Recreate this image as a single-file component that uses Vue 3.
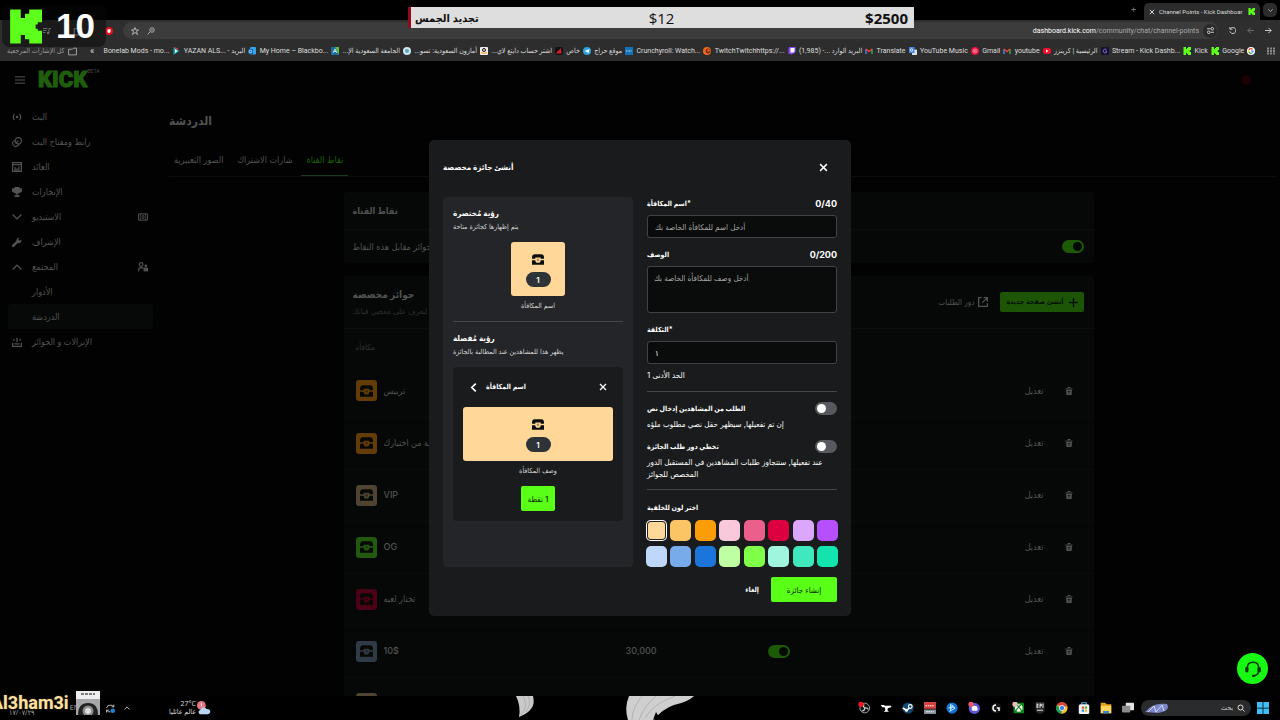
<script setup>
import { ref } from 'vue'

const bookmarks = [
  { text: 'Bonelab Mods - mo...', icon: 'play' },
  { text: 'YAZAN ALS... - البريد', icon: 'outlook' },
  { text: 'My Home – Blackbo...', icon: 'board' },
  { text: 'الجامعة السعودية الإ...', icon: 'round', rtl: true },
  { text: 'أمازون السعودية: تسو...', icon: 'amazon', rtl: true },
  { text: 'اشتر حساب دايتع لاي...', icon: 'redtri', rtl: true },
  { text: 'خاص', icon: 'telegram', rtl: true },
  { text: 'موقع حراج', icon: 'haraj', rtl: true },
  { text: 'Crunchyroll: Watch...', icon: 'crunchy' },
  { text: 'TwitchTwitchhttps://...', icon: 'twitch' },
  { text: 'البريد الوارد ...- (1,985)', icon: 'gmail', rtl: true },
  { text: 'Translate', icon: 'translate' },
  { text: 'YouTube Music', icon: 'ytmusic' },
  { text: 'Gmail', icon: 'gmail' },
  { text: 'youtube', icon: 'youtube' },
  { text: 'الرئيسية | كرينزز', icon: 'creators', rtl: true },
  { text: 'Stream - Kick Dashb...', icon: 'kick' },
  { text: 'Kick', icon: 'kick' },
  { text: 'Google', icon: 'google' }
]

const nav = [
  { text: 'البث', icon: 'live' },
  { text: 'رابط ومفتاح البث', icon: 'link' },
  { text: 'العائد', icon: 'chart' },
  { text: 'الإنجازات', icon: 'trophy' },
  { text: 'الاستيديو', icon: 'down', end: 'studio' },
  { text: 'الإشراف', icon: 'wrench' },
  { text: 'المجتمع', icon: 'up', end: 'people' },
  { text: 'الأدوار' },
  { text: 'الدردشة', active: true },
  { text: 'الإنزالات و الجوائز', icon: 'drops' }
]

const rewards = [
  { name: 'تربيس', color: '#643c05' },
  { name: 'أغنية من اختيارك', color: '#643c05' },
  { name: 'VIP', color: '#4f4431' },
  { name: 'OG', color: '#23580f' },
  { name: 'تختار لعبه', color: '#4b0016' },
  { name: '10$', color: '#2f3a46', cost: '30,000' },
  { name: '', color: '#4f4431' }
]

const swatches = [
  '#ffd899', '#fbc566', '#fb9d08', '#f9c8da', '#eb5f8d', '#dc0040', '#dba6fb', '#b650ff',
  '#bfd7f8', '#77abe9', '#1b75db', '#bfffa3', '#80ff48', '#9ff5dd', '#3fe8bd', '#13e4ad'
]
const picked = ref(0)

const apps = ['obs', 'anvil', 'steam', 'stream', 'battle', 'discord', 'logi', 'xbox', 'epic', 'chrome', 'store', 'files', 'tasks']
</script>

<template>
  <div class="screen">
    <svg class="defs" aria-hidden="true">
      <symbol id="kick" viewBox="0 0 16 16"><path fill="#5dff1c" d="M1 0h5v4h2V2h2V0h6v6h-2v1h-1v2h1v1h2v6h-6v-2H8v-2H6v4H1z" /></symbol>
      <symbol id="play" viewBox="0 0 16 16"><path fill="#16a5a5" d="M3 0l12 8-12 8z" /><path fill="#e33" d="M3 0l10 7-2-5z" /><path fill="#fff" d="M6 4l5 4-5 4z" /></symbol>
      <symbol id="outlook" viewBox="0 0 16 16"><rect x="4" width="12" height="15" rx="2" fill="#34a5e8" /><rect y="4" width="10" height="10" rx="1" fill="#0a62b5" /><circle cx="5" cy="9" r="2.5" fill="none" stroke="#fff" stroke-width="1.5" /></symbol>
      <symbol id="board" viewBox="0 0 16 16"><rect width="16" height="16" fill="#1c6d9e" /><path fill="#5bbf3a" d="M8 0h8v16z" /><path d="M4 12l4-8 4 8M6 9h4" stroke="#fff" stroke-width="1.5" fill="none" /></symbol>
      <symbol id="round" viewBox="0 0 16 16"><circle cx="8" cy="8" r="8" fill="#cfe6ee" /><circle cx="8" cy="8" r="4" fill="#5aa5bb" /></symbol>
      <symbol id="amazon" viewBox="0 0 16 16"><rect width="16" height="16" rx="2" fill="#eee" /><circle cx="8" cy="6" r="3" fill="none" stroke="#111" stroke-width="2" /><path d="M2 11q6 4 12 0" stroke="#f90" stroke-width="2" fill="none" /></symbol>
      <symbol id="redtri" viewBox="0 0 16 16"><rect width="16" height="16" rx="4" fill="#111" /><path fill="#d81b2e" d="M1 13L12 2l1 11z" /></symbol>
      <symbol id="telegram" viewBox="0 0 16 16"><circle cx="8" cy="8" r="8" fill="#2ba3e0" /><path fill="#fff" d="M3 8l10-4-2 9-3-3z" /></symbol>
      <symbol id="haraj" viewBox="0 0 16 16"><rect width="16" height="16" fill="#1472bb" /><path d="M2 8h12" stroke="#bcd9ee" stroke-width="2" stroke-dasharray="2 1" /></symbol>
      <symbol id="crunchy" viewBox="0 0 16 16"><circle cx="8" cy="8" r="8" fill="#f26a1b" /><circle cx="10" cy="8" r="5" fill="#7c2c08" /><circle cx="11" cy="7" r="2.5" fill="#f26a1b" /></symbol>
      <symbol id="twitch" viewBox="0 0 16 16"><path fill="#9147ff" d="M3 0h12v10l-5 4H8l-2 2v-2H1V3z" /><path fill="#fff" d="M5 2h8v7l-2 2H5z" /></symbol>
      <symbol id="gmail" viewBox="0 0 16 16"><path d="M2 14V4" stroke="#4285f4" stroke-width="3" /><path d="M14 14V4" stroke="#34a853" stroke-width="3" /><path d="M2 4l6 5 6-5" stroke="#ea4335" stroke-width="3" fill="none" /></symbol>
      <symbol id="translate" viewBox="0 0 16 16"><rect x="6" y="5" width="10" height="11" rx="1" fill="#dadde1" /><rect width="11" height="12" rx="1" fill="#4385f0" /><circle cx="5" cy="6" r="2.5" fill="none" stroke="#fff" stroke-width="1.5" /></symbol>
      <symbol id="ytmusic" viewBox="0 0 16 16"><circle cx="8" cy="8" r="8" fill="#f20d3d" /><circle cx="8" cy="8" r="4" fill="none" stroke="#fff" /><path fill="#fff" d="M7 6l3 2-3 2z" /></symbol>
      <symbol id="youtube" viewBox="0 0 16 16"><rect y="2" width="16" height="12" rx="4" fill="#f20d2d" /><path fill="#fff" d="M6 5l5 3-5 3z" /></symbol>
      <symbol id="creators" viewBox="0 0 16 16"><rect width="16" height="16" rx="2" fill="#17112b" /><path d="M11 5a4 4 0 1 0 0 6V8H8" fill="none" stroke="#7a64c9" stroke-width="2" /></symbol>
      <symbol id="google" viewBox="0 0 16 16"><circle cx="8" cy="8" r="8" fill="#fff" /><path d="M11 5a4 4 0 0 0-7 1" stroke="#ea4335" stroke-width="2.4" fill="none" /><path d="M4 6a4 4 0 0 0 0 4" stroke="#fbbc05" stroke-width="2.4" fill="none" /><path d="M4 10a4 4 0 0 0 7 1" stroke="#34a853" stroke-width="2.4" fill="none" /><path d="M8 8h4q0 2-1 3" stroke="#4285f4" stroke-width="2.4" fill="none" /></symbol>

      <symbol id="live" viewBox="0 0 16 16"><path d="M4 3Q0 8 4 13M12 3q4 5 0 10" fill="none" stroke="currentColor" stroke-width="1.8" /><circle cx="8" cy="8" r="2" fill="currentColor" /></symbol>
      <symbol id="link" viewBox="0 0 16 16"><circle cx="10" cy="6" r="5" fill="none" stroke="currentColor" stroke-width="1.8" /><path d="M5 5q-5 3-4 6 2 5 6 4 4-1 5-4M6 10l4-4" fill="none" stroke="currentColor" stroke-width="1.8" /></symbol>
      <symbol id="chart" viewBox="0 0 16 16"><path d="M1 1v14h14V1zM1 4h14M5 15V8M8 15v-5M11 15V7" fill="none" stroke="currentColor" stroke-width="2" /></symbol>
      <symbol id="trophy" viewBox="0 0 16 16"><path fill="currentColor" d="M4 0h8v2h4v3q0 4-4 4-1 1-3 2v2h3v3H4v-3h3v-2q-2-1-3-2-4 0-4-4V2h4z" /></symbol>
      <symbol id="down" viewBox="0 0 16 16"><path d="M1 4l7 7 7-7" fill="none" stroke="currentColor" stroke-width="2.2" /></symbol>
      <symbol id="up" viewBox="0 0 16 16"><path d="M1 12l7-7 7 7" fill="none" stroke="currentColor" stroke-width="2.2" /></symbol>
      <symbol id="wrench" viewBox="0 0 16 16"><path d="M2 14l7-7" stroke="currentColor" stroke-width="4" stroke-linecap="round" /><path fill="currentColor" d="M7 6q0-5 5-5l-2 3 2 2 3-2q1 6-5 6z" /></symbol>
      <symbol id="studio" viewBox="0 0 16 16"><path d="M1 3h14v10H1z" fill="none" stroke="currentColor" stroke-width="1.600" /><path d="M4 3v10M12 3v10" stroke="currentColor" /><rect x="6.500" y="6" width="3" height="4" fill="none" stroke="currentColor" stroke-width="1.200" /></symbol>
      <symbol id="people" viewBox="0 0 16 16"><circle cx="5" cy="4" r="3" fill="none" stroke="currentColor" stroke-width="1.8" /><path d="M1 15v-2q0-4 4-4 3 0 4 2" fill="none" stroke="currentColor" stroke-width="1.8" /><circle cx="12.500" cy="6" r="2.200" fill="currentColor" /><rect x="9" y="9" width="7" height="6" fill="currentColor" /></symbol>
      <symbol id="drops" viewBox="0 0 16 16"><path d="M1 9v6h14V9M4 11h8M8 1v7M3 3v3M13 3v3" fill="none" stroke="currentColor" stroke-width="2" /></symbol>
      <symbol id="chest" viewBox="0 0 18 16"><path fill="currentColor" d="M4 0h10q4 0 4 5v2h-5V5H5v2H0V5q0-5 4-5zM0 9h5q0 4 4 4t4-4h5v7H0z" /><circle cx="9" cy="8.500" r="2" fill="currentColor" opacity=".35" /></symbol>
      <symbol id="trash" viewBox="0 0 16 16"><path d="M1 4h14M5 1h6" stroke="currentColor" stroke-width="2" /><path fill="currentColor" d="M2 6h12l-1 10H3z" /><path d="M5 9h6M6 12h4" stroke="#050807" stroke-width="1.200" /></symbol>
      <symbol id="x" viewBox="0 0 16 16"><path d="M2 2l12 12M14 2L2 14" stroke="currentColor" stroke-width="2.600" /></symbol>
      <symbol id="back" viewBox="0 0 16 16"><path d="M12 1L5 8l7 7" fill="none" stroke="currentColor" stroke-width="3" /></symbol>
      <symbol id="plus" viewBox="0 0 16 16"><path d="M8 0v16M0 8h16" stroke="currentColor" stroke-width="2.600" /></symbol>
      <symbol id="ext" viewBox="0 0 16 16"><path d="M6 1H1v14h14v-5M9 1h6v6M15 1L7 9" fill="none" stroke="currentColor" stroke-width="2" /></symbol>
      <symbol id="headset" viewBox="0 0 16 16"><path d="M3 9V7q0-5 5-5t5 5v2q0 4-4 5" fill="none" stroke="currentColor" stroke-width="1.4" /><rect x="1" y="6" width="3" height="5" rx="1.500" fill="currentColor" /><rect x="12" y="6" width="3" height="5" rx="1.500" fill="currentColor" /><rect x="7" y="13" width="3" height="2" rx="1" fill="currentColor" /></symbol>

      <symbol id="obs" viewBox="0 0 16 16"><circle cx="9" cy="8" r="6.500" fill="#111" stroke="#ccc" /><path d="M9 8q-3-2-1-5M9 8q3-1 5 2M9 8q0 4-4 4" fill="none" stroke="#ccc" stroke-width="1.500" /><circle cx="4" cy="3" r="3.500" fill="#f5141e" /></symbol>
      <symbol id="anvil" viewBox="0 0 16 16"><path fill="#fff" d="M1 4h5v1h9v2q-4 0-5 2v2l2 2H5l2-2V9L6 7H3z" /></symbol>
      <symbol id="steam" viewBox="0 0 16 16"><circle cx="8" cy="8" r="7.500" fill="#14486f" /><circle cx="11" cy="6" r="2.500" fill="none" stroke="#fff" stroke-width="1.500" /><path d="M1 8l5 3 4-3" stroke="#fff" stroke-width="2" fill="none" /><circle cx="6" cy="11" r="2" fill="#fff" /></symbol>
      <symbol id="stream" viewBox="0 0 16 16"><rect width="16" height="9" fill="#d8413c" /><rect y="10" width="16" height="6" fill="#87909a" /><path d="M2 5h12M3 13h10" stroke="#fff" stroke-width="1.500" stroke-dasharray="2 1" /></symbol>
      <symbol id="battle" viewBox="0 0 16 16"><circle cx="8" cy="8" r="7.500" fill="#1473d2" /><path d="M6 3l6 5-6 4zM3 8q4-3 9 0M5 13l4-9" fill="none" stroke="#bfe5ff" stroke-width="1.300" /></symbol>
      <symbol id="discord" viewBox="0 0 16 16"><circle cx="8.500" cy="8.500" r="7.500" fill="#5c55d8" /><path fill="#fff" d="M5 6q4-2 7 0l1 5-3 1-1-1-1 1-3-1z" /><circle cx="4" cy="3" r="3.500" fill="#ee5967" /></symbol>
      <symbol id="logi" viewBox="0 0 16 16"><circle cx="8" cy="8" r="7" fill="#161616" /><path d="M8 4a4 4 0 0 0 0 8M9 8h3v4" fill="none" stroke="#fff" stroke-width="2" /></symbol>
      <symbol id="xbox" viewBox="0 0 16 16"><rect x="2" y="1" width="14" height="14" rx="1" fill="#12851a" /><circle cx="9" cy="8" r="5" fill="#fff" /><path d="M5 12q2-4 4-5 2 1 4 5M6 4l3 2 3-2" stroke="#12851a" stroke-width="1.500" fill="none" /><circle cx="4" cy="3" r="3.500" fill="#e8bdc0" /></symbol>
      <symbol id="epic" viewBox="0 0 16 16"><path fill="#292929" d="M2 0h12v13l-6 3-6-3z" /><path d="M4 2v6M4 3h2M4 5h2M4 7h2M8 2v6M8 3h2v2H8M12 2v6M4 11h8" stroke="#eee" stroke-width="1.200" fill="none" /></symbol>
      <symbol id="chrome" viewBox="0 0 16 16"><circle cx="8" cy="8" r="7.500" fill="#f7c51d" /><path fill="#db4437" d="M1 4a7.500 7.500 0 0 1 14 2H8z" /><path fill="#1b9b55" d="M1 4a7.500 7.500 0 0 0 6 11.500L8 11z" /><circle cx="8" cy="8" r="3.500" fill="#3f7de8" stroke="#fff" /></symbol>
      <symbol id="store" viewBox="0 0 16 16"><path d="M5 3V1h6v2" fill="none" stroke="#4bb3ea" stroke-width="1.500" /><rect x="1" y="3" width="14" height="13" rx="2" fill="#eef2f5" /><path fill="#e8502f" d="M5 6h3v3H5z" /><path fill="#5bb52d" d="M9 6h3v3H9z" /><path fill="#2b8fe0" d="M5 10h3v3H5z" /><path fill="#f4b521" d="M9 10h3v3H9z" /></symbol>
      <symbol id="files" viewBox="0 0 16 16"><path fill="#e2a21a" d="M1 1h6l2 2h6v12H1z" /><path fill="#ffd55c" d="M1 5h14v10H1z" /><path fill="#2f86d6" d="M4 12h8v3H4z" /></symbol>
      <symbol id="tasks" viewBox="0 0 16 16"><rect x="5" y="1" width="11" height="10" rx="1" fill="#e4e4e4" /><rect y="5" width="11" height="9" rx="1" fill="#8b8b8b" /></symbol>
    </svg>

    <header class="browser">
      <div class="tabstrip">
        <span class="newtab">+</span>
        <div class="tab">
          <button class="bare" aria-label="Close tab"><svg class="i6"><use href="#x" /></svg></button>
          <span class="tabname">Channel Points - Kick Dashboar</span>
          <svg class="i7"><use href="#kick" /></svg>
        </div>
        <button class="tabmenu" aria-label="Tabs"><svg class="i5"><use href="#down" /></svg></button>
      </div>
      <div class="toolbar">
        <div class="tools">
          <svg class="i8" viewBox="0 0 16 16"><path d="M0 3h9M0 7h7M0 11h5M12 12V3h4" fill="none" stroke="#ccc" stroke-width="2" /><circle cx="10" cy="12" r="2.500" fill="#ccc" /></svg>
          <svg class="i10" viewBox="0 0 16 16"><path d="M2 4h4q2-4 4 0h4v10H2z" fill="none" stroke="#aaa" stroke-width="2" /></svg>
          <svg class="i8" viewBox="0 0 16 16"><circle cx="8" cy="8" r="8" fill="#e0101c" /><path fill="#fff" d="M5 5l6-1v6q-3 4-6 0z" /></svg>
        </div>
        <div class="address">
          <svg class="i8" viewBox="0 0 16 16"><path d="M8 1l2 5h5l-4 3 2 6-5-4-5 4 2-6-4-3h5z" fill="none" stroke="#ccc" stroke-width="1.600" /></svg>
          <svg class="i8" viewBox="0 0 16 16"><circle cx="10" cy="6" r="4.500" fill="none" stroke="#aaa" stroke-width="2" /><path d="M7 9l-6 6M8 6h4" stroke="#aaa" stroke-width="2" /></svg>
          <span class="url"><b>dashboard.kick.com</b>/community/chat/channel-points</span>
          <span class="site"><svg class="i7" viewBox="0 0 16 16"><path d="M0 4h8M8 12h8" stroke="#ddd" stroke-width="2" /><circle cx="12" cy="4" r="3" fill="none" stroke="#ddd" stroke-width="2" /><circle cx="4" cy="12" r="3" fill="none" stroke="#ddd" stroke-width="2" /></svg></span>
        </div>
        <button class="bare" aria-label="Reload"><svg class="i7" viewBox="0 0 16 16"><path d="M3 4a7 7 0 1 1-1 6M2 0v5h6" fill="none" stroke="#ddd" stroke-width="2" /></svg></button>
        <button class="bare" aria-label="Forward"><svg class="i7" viewBox="0 0 16 16"><path d="M16 8H2M8 2L2 8l6 6" fill="none" stroke="#777" stroke-width="2" /></svg></button>
        <button class="bare" aria-label="Back"><svg class="i7" viewBox="0 0 16 16"><path d="M0 8h14M8 2l6 6-6 6" fill="none" stroke="#ddd" stroke-width="2" /></svg></button>
      </div>
      <nav class="bookmarks">
        <a href="#" class="bm all"><span dir="rtl">كل الإشارات المرجعية</span><svg class="i9" viewBox="0 0 16 16"><path d="M1 4h7l2-2h5v12H1z" fill="none" stroke="#aaa" stroke-width="1.600" /></svg></a>
        <span class="more">«</span>
        <a v-for="(b, i) in bookmarks" :key="i" href="#" class="bm">
          <span :dir="b.rtl ? 'rtl' : 'ltr'">{{ b.text }}</span>
          <svg class="i8"><use :href="'#' + b.icon" /></svg>
        </a>
        <svg class="i8 grid" viewBox="0 0 16 16"><path d="M0 3h16M0 8h16M0 13h16" stroke="#888" stroke-width="4" stroke-dasharray="4 2" /></svg>
      </nav>
    </header>

    <div class="page">
      <div class="dash">
        <div class="topbar">
          <svg class="burger" viewBox="0 0 16 16"><path d="M0 3h16M0 8h16M0 13h16" stroke="#555" stroke-width="1.600" /></svg>
          <span class="brand">KICK</span><span class="beta">BETA</span>
          <span class="avatar"></span>
        </div>
        <div class="cols">
          <nav class="side">
            <a v-for="(n, i) in nav" :key="i" href="#" class="navitem" :class="{ active: n.active }">
              <svg class="i10"><use v-if="n.icon" :href="'#' + n.icon" /></svg>
              <span>{{ n.text }}</span>
              <svg v-if="n.end" class="i10 end"><use :href="'#' + n.end" /></svg>
            </a>
          </nav>
          <main class="main">
            <h1>الدردشة</h1>
            <div class="tabs">
              <a href="#">الصور التعبيرية</a>
              <a href="#">شارات الاشتراك</a>
              <a href="#" class="on">نقاط القناة</a>
            </div>
            <section class="card">
              <h2>نقاط القناة</h2>
              <div class="allow">
                <label for="allow">اسمح للمشاهدين بالمطالبة بجوائز مقابل هذه النقاط</label>
                <input id="allow" type="checkbox" class="switch dim" checked>
              </div>
            </section>
            <section class="card">
              <div class="cardhead">
                <div>
                  <h3>جوائز مخصصة</h3>
                  <p>أنشئ جوائز خاصة بك لتعرف على معجبي قناتك</p>
                </div>
                <a href="#" class="queue">دور الطلبات <svg class="i10"><use href="#ext" /></svg></a>
                <button class="new">أنشئ صفحة جديدة <svg class="i9"><use href="#plus" /></svg></button>
              </div>
              <table>
                <thead><tr><th class="c1">مكافأة</th><th class="c2"></th><th class="c3"></th><th></th></tr></thead>
                <tbody>
                  <tr v-for="(r, i) in rewards" :key="i">
                    <td><div class="reward"><span class="tile" :style="{ background: r.color }"><svg class="tchest"><use href="#chest" /></svg></span>{{ r.name }}</div></td>
                    <td>{{ r.cost }}</td>
                    <td><input type="checkbox" class="switch dim" checked :aria-label="r.name"></td>
                    <td><div class="acts"><button class="bare">تعديل</button><button class="bare" aria-label="Delete"><svg class="i8"><use href="#trash" /></svg></button></div></td>
                  </tr>
                </tbody>
              </table>
            </section>
          </main>
        </div>
      </div>

      <div class="backdrop">
        <form class="dialog" role="dialog" @submit.prevent>
          <div class="dhead">
            <h2>أنشئ جائزة مخصصة</h2>
            <button type="button" class="bare" aria-label="Close"><svg class="i9"><use href="#x" /></svg></button>
          </div>
          <div class="dbody">
            <div class="preview">
              <h3>رؤية مُختصرة</h3>
              <p>يتم إظهارها كجائزة متاحة</p>
              <div class="mini"><svg class="chest"><use href="#chest" /></svg><span class="pill">1</span></div>
              <p class="mid">اسم المكافأة</p>
              <hr>
              <h3>رؤية مُفصلة</h3>
              <p>يظهر هذا للمشاهدين عند المطالبة بالجائزة</p>
              <div class="detail">
                <div class="dethead">
                  <svg class="i9"><use href="#back" /></svg>
                  <b>اسم المكافأة</b>
                  <svg class="i8"><use href="#x" /></svg>
                </div>
                <div class="mini wide"><svg class="chest"><use href="#chest" /></svg><span class="pill">1</span></div>
                <p class="mid">وصف المكافأة</p>
                <button type="button" class="go point" dir="rtl">1 نقطة</button>
              </div>
            </div>
            <div class="fields">
              <div class="lab"><label for="name">اسم المكافأة*</label><span>0/40</span></div>
              <input id="name" class="box" placeholder="أدخل اسم للمكافأة الخاصة بك">
              <div class="lab"><label for="desc">الوصف</label><span>0/200</span></div>
              <textarea id="desc" class="box area" placeholder="أدخل وصف للمكافأة الخاصة بك"></textarea>
              <div class="lab"><label for="cost">التكلفة*</label></div>
              <input id="cost" class="box" value="١">
              <p class="hint">الحد الأدنى 1</p>
              <hr>
              <div class="opt"><label for="ask">الطلب من المشاهدين إدخال نص</label><input id="ask" type="checkbox" class="switch"></div>
              <p class="note">إن تم تفعيلها, سيظهر حقل نصي مطلوب ملؤه</p>
              <div class="opt second"><label for="skip">تخطي دور طلب الجائزة</label><input id="skip" type="checkbox" class="switch"></div>
              <p class="note">عند تفعيلها, ستتجاوز طلبات المشاهدين في المستقبل الدور<br>المخصص للجوائز</p>
              <hr class="last">
              <div class="lab">اختر لون للخلفية</div>
              <div class="swatches">
                <button v-for="(c, i) in swatches" :key="c" type="button" class="sw" :class="{ sel: i === picked }" :style="{ background: c }" :aria-label="c" @click="picked = i"></button>
              </div>
            </div>
          </div>
          <div class="dfoot">
            <button type="button" class="cancel">إلغاء</button>
            <button class="go create">إنشاء جائزة</button>
          </div>
        </form>
      </div>
      <button class="support" aria-label="Support"><svg class="i18"><use href="#headset" /></svg></button>
    </div>

    <footer class="taskbar">
      <div class="clock"><span class="date">١٧/٠٧/٢٩</span><span>EN</span></div>
      <svg class="i9 sync" viewBox="0 0 16 16"><path d="M1 7q1-5 7-5 4 0 6 3V1M14 5h-4M1 15v-4h4M1 11q3 4 7 3" fill="none" stroke="#ccc" stroke-width="1.600" /><circle cx="12" cy="12" r="4" fill="#1c83dc" /></svg>
      <svg class="i6"><use href="#up" /></svg>
      <div class="weather"><span>27°C</span><span>عالم عائليا</span></div>
      <svg class="wicon" viewBox="0 0 16 16"><circle cx="5" cy="5" r="5" fill="#e87582" /><path d="M5 2v4" stroke="#fff" /><path fill="#b9d5f5" d="M3 15q-3-3 1-5 3-5 7-1 5 0 4 4-1 2-3 2z" /></svg>
      <div class="apps">
        <svg v-for="a in apps" :key="a" class="app"><use :href="'#' + a" /></svg>
      </div>
      <div class="search">
        <svg class="bug" viewBox="0 0 24 11"><path fill="#7a86c8" d="M0 9Q8-1 22 1q4 7-9 9z" /><path d="M3 9l6-6 2 6 6-7 2 6" stroke="#d6d8f5" fill="none" /></svg>
        <input aria-label="Search" placeholder="بحث" dir="rtl">
        <svg class="i8" viewBox="0 0 16 16"><circle cx="7" cy="7" r="5" fill="none" stroke="#ddd" stroke-width="2" /><path d="M11 11l4 4" stroke="#ddd" stroke-width="2" /></svg>
      </div>
      <svg class="i12" viewBox="0 0 16 16"><path fill="#41bdf5" d="M0 0h7.500v7.500H0zM8.500 0H16v7.500H8.500zM0 8.500h7.500V16H0zM8.500 8.500H16V16H8.500z" /></svg>
      <svg class="feathers" viewBox="0 0 180 24"><path fill="#c9c9c9" d="M1 0h17q4 14-14 21Q6 10 1 0z" /><path d="M8 0q6 10-2 19M13 0q4 8-2 16" stroke="#b0b0b0" fill="none" /><path fill="#cfcfcf" d="M114 0h65q-6 6-20 9-12 4-20 15h-26q-4-12 1-24z" /><path d="M127 0q-10 12-10 24M141 0q-12 10-17 24M160 0q-22 8-30 22" stroke="#b2b2b2" fill="none" /><path fill="#000" d="M138 24l3-8 3 5z" /></svg>
    </footer>

    <div class="count"><svg class="bigk"><use href="#kick" /></svg><span>10</span></div>
    <div class="goal"><b dir="rtl">تجديد الجمس</b><span>$12</span><b>$2500</b></div>
    <div class="streamer">Al3ham3i</div>
    <svg class="washer" viewBox="0 0 24 24"><rect width="24" height="24" fill="#a7a7a9" /><path fill="#eee" d="M0 0h24v8H0z" /><path d="M5 3h14" stroke="#555" stroke-width="1.500" stroke-dasharray="3 1" /><path fill="#222" d="M2 24q0-12 10-12t10 12z" /><circle cx="12" cy="20" r="5.500" fill="#8e8e90" /><circle cx="12" cy="20" r="3" fill="#ddd" /></svg>
  </div>
</template>

<style>
body { background: #000; }
</style>

<style scoped>
* { box-sizing: border-box; }
.screen { position: relative; display: flex; flex-direction: column; height: 100vh; overflow: hidden; background: #000; color: #ddd; font: 8px/12px Inter, "DejaVu Sans Condensed", "DejaVu Sans", sans-serif; }
.defs { position: absolute; width: 0; height: 0; }
svg { flex: none; display: block; }
h1, h2, h3, p { margin: 0; font-size: inherit; }
a { color: inherit; text-decoration: none; }
button, input, textarea { font: inherit; color: inherit; margin: 0; }
.bare { padding: 0; border: 0; background: none; }
.i5 { width: 5px; height: 5px; } .i6 { width: 6px; height: 6px; } .i7 { width: 7px; height: 7px; }
.i8 { width: 8px; height: 8px; } .i9 { width: 9px; height: 9px; } .i10 { width: 10px; height: 10px; }
.i12 { width: 12px; height: 12px; } .i18 { width: 18px; height: 18px; }

.browser { flex: none; font: 7px/10px Roboto, "DejaVu Sans Condensed", "DejaVu Sans", sans-serif; color: #ddd; }
.tabstrip { display: flex; justify-content: flex-end; align-items: center; height: 20px; padding-right: 3px; }
.newtab { color: #777; margin-right: 8px; font-size: 9px; }
.tab { display: flex; align-items: center; gap: 4px; align-self: flex-end; width: 116px; height: 17px; padding: 0 5px; border-radius: 5px 5px 0 0; background: #2c2c2c; }
.tabname { flex: 1; font-size: 6px; white-space: nowrap; }
.tabmenu { display: grid; place-items: center; width: 14px; height: 14px; margin-left: 3px; padding: 0; border: 0; border-radius: 5px; background: #2c2c2c; }
.toolbar { display: flex; align-items: center; gap: 11px; height: 21px; padding-right: 8px; background: #2e2e2e; }
.tools { display: flex; align-items: center; gap: 22px; width: 112px; padding-left: 43px; }
.address { flex: 1; display: flex; align-items: center; gap: 8px; height: 17px; padding: 0 1px 0 8px; border-radius: 9px; background: #3c3c3c; }
.url { margin-left: auto; color: #aaa; }
.url b { font-weight: 400; color: #fff; }
.site { display: grid; place-items: center; width: 14px; height: 14px; margin-left: -4px; border-radius: 7px; background: #2a2a2a; }
.bookmarks { display: flex; align-items: center; justify-content: space-between; height: 20px; padding: 0 5px 0 7px; background: #2d2d2d; }
.bm { display: flex; align-items: center; gap: 3px; white-space: nowrap; }
.bm.all { color: #999; }
.more { margin: 0 6px 0 10px; font-size: 9px; }
.grid { margin-left: 8px; }

.page { position: relative; flex: 1; min-height: 0; overflow: hidden; background: #020202; }
.dash { height: 100%; color: #525252; font-size: 9px; }
.topbar { display: flex; align-items: center; height: 37px; padding: 0 29px 0 15px; }
.burger { width: 10px; height: 10px; margin-right: 13px; }
.brand { color: #1f5f0c; font: 900 22px/22px Roboto, sans-serif; -webkit-text-stroke: 1px #1f5f0c; }
.beta { align-self: flex-start; margin-top: 7px; color: #444; font-size: 5px; line-height: 6px; }
.avatar { width: 10px; height: 10px; margin-left: auto; border-radius: 5px; background: #190104; }
.cols { display: flex; }
.side { flex: none; width: 161px; padding: 6px 8px 0; }
.navitem { display: flex; align-items: center; gap: 10px; height: 25px; padding: 0 5px 0 4px; border-radius: 3px; font-weight: 500; }
.navitem.active { background: #060908; }
.end { margin-left: auto; }
.main { flex: 1; min-width: 0; padding-right: 4px; }
h1 { margin: 14px 8px 0; font-size: 12px; line-height: 18px; }
.tabs { display: flex; gap: 4px; margin: 22px 0 15px 8px; border-bottom: 1px solid #0b0d0c; }
.tabs a { height: 24px; padding: 0 5px; line-height: 16px; }
.tabs .on { color: #1c6207; border-bottom: 1px solid #1c3a20; }
.card { max-width: 750px; margin: 0 auto 13px; border-radius: 3px; background: #050807; }
.card h2 { height: 38px; padding-left: 9px; line-height: 38px; font-size: 9px; border-bottom: 1px solid #0b0e0d; }
.allow { display: flex; align-items: center; justify-content: space-between; height: 33px; padding: 0 10px 0 9px; }
.cardhead { display: flex; align-items: center; gap: 12px; height: 53px; padding: 0 10px 0 9px; border-bottom: 1px solid #0b0e0d; }
.cardhead > div { flex: 1; }
.cardhead h3 { font-size: 10px; line-height: 18px; }
.cardhead p { color: #2b2d2c; font-size: 8px; line-height: 16px; }
.queue { display: flex; align-items: center; gap: 4px; font-size: 8px; }
.new { display: flex; align-items: center; gap: 5px; height: 20px; padding: 0 6px; border: 0; border-radius: 2px; background: #1b5505; color: #031001; font-size: 7px; font-weight: 600; }
table { width: 100%; border-collapse: collapse; table-layout: fixed; }
th { height: 36px; padding: 0 12px; text-align: left; font-weight: 400; color: #303231; font-size: 8px; }
.c1 { width: 36%; } .c2 { width: 19%; } .c3 { width: 15%; }
td { height: 52px; padding: 0 12px; border-bottom: 1px solid #090c0b; vertical-align: middle; font-weight: 500; }
.reward { display: flex; align-items: center; gap: 7px; white-space: nowrap; }
.tile { display: grid; place-items: center; width: 21px; height: 21px; border-radius: 3px; }
.tchest { width: 13px; height: 12px; color: #080805; }
.acts { display: flex; justify-content: flex-end; gap: 21px; padding-right: 9px; }

.switch { appearance: none; flex: none; display: block; width: 22px; height: 13px; padding: 2px; border-radius: 7px; background: #565a5e; }
.switch::before { content: ""; display: block; width: 9px; height: 9px; border-radius: 5px; background: #fff; }
.switch.dim { background: #1d5a07; }
.switch.dim::before { margin-left: auto; background: #030a02; }

.backdrop { position: absolute; inset: 0; display: grid; place-items: center; padding-bottom: 1px; }
.dialog { width: 422px; padding: 0 14px 14px; border-radius: 5px; background: #191b1c; color: #fff; }
.dhead { display: flex; align-items: center; justify-content: space-between; height: 57px; padding: 0 9px 3px 0; }
.dbody { display: grid; grid-template-columns: minmax(0, 1fr) minmax(0, 1fr); gap: 14px; }
.preview { padding: 10px; border-radius: 4px; background: #232528; }
.preview h3 { font-size: 8px; line-height: 13px; }
.preview p { font-size: 7px; line-height: 14px; color: #d8d8d8; }
.preview .mid { text-align: center; line-height: 20px; }
.mini { display: flex; flex-direction: column; align-items: center; gap: 7px; width: 54px; height: 54px; margin: 8px auto 0; padding-top: 12px; border-radius: 3px; background: #ffd899; }
.mini.wide { width: auto; margin-top: 0; }
.chest { width: 12px; height: 11px; color: #0b0c0d; }
.pill { display: grid; place-items: center; width: 25px; height: 15px; border-radius: 8px; background: #2e3338; font-weight: 600; }
hr { margin: 0; border: 0; border-top: 1px solid #44474a; }
.preview hr { margin: 5px 0 10px; }
.detail { margin-top: 8px; padding: 0 10px 10px; border-radius: 4px; background: #191b1c; }
.dethead { display: flex; align-items: center; gap: 8px; height: 40px; padding: 0 6px; }
.dethead b { flex: 1; font-size: 7px; }
.go { border: 0; border-radius: 2px; background: #5aff17; color: #0d2a04; font-weight: 500; }
.point { display: block; height: 25px; margin: 5px auto 0; padding: 0 7px; }
.lab { display: flex; align-items: center; justify-content: space-between; height: 13px; font-weight: 700; font-size: 7px; }
.lab span { font-size: 9px; }
.box { display: block; width: 100%; height: 23px; padding: 0 7px; border: 1px solid #414447; border-radius: 3px; background: #0a0b0b; outline: 0; }
.box::placeholder { color: #a5a5a5; }
.fields .box { margin: 5px 0 10px; }
.fields .area { height: 47px; padding: 5px 6px; resize: none; }
.fields #cost { margin-bottom: 5px; }
.hint { line-height: 13px; }
.fields hr { margin: 9px 0 10px; }
.fields .last { margin-bottom: 11px; }
.opt { display: flex; align-items: center; justify-content: space-between; height: 13px; font-weight: 700; font-size: 7px; }
.note { margin-top: 3px; line-height: 12px; white-space: nowrap; }
.second { margin-top: 10px; }
.swatches { display: grid; grid-template-columns: repeat(8, 21px); justify-content: space-between; gap: 5px 0; margin: 6px -1px 0; }
.sw { height: 21px; padding: 0; border: 0; border-radius: 5px; }
.sw.sel { box-shadow: inset 0 0 0 1px #fff, inset 0 0 0 2px #222; }
.dfoot { display: flex; justify-content: flex-end; align-items: center; gap: 12px; margin-top: 10px; }
.cancel { padding: 0; border: 0; background: none; font-size: 7px; font-weight: 700; }
.create { height: 25px; width: 66px; padding: 0; }
.support { position: absolute; right: 12px; bottom: 12px; display: grid; place-items: center; width: 31px; height: 31px; padding: 0; border: 0; border-radius: 16px; background: #17f812; color: #06380a; }

.taskbar { position: relative; flex: none; display: flex; align-items: center; height: 24px; padding: 0 11px 0 9px; font: 7px/8px "Open Sans", "DejaVu Sans Condensed", "DejaVu Sans", sans-serif; }
.clock { display: flex; align-items: center; justify-content: space-between; width: 70px; margin-right: 27px; color: #aaa; }
.date { padding-top: 10px; }
.sync { margin-right: 9px; }
.weather { display: flex; flex-direction: column; align-items: flex-end; width: 66px; margin-right: 1px; }
.wicon { width: 14px; height: 14px; }
.apps { display: flex; align-items: center; gap: 10px; margin-left: auto; margin-right: 7px; }
.app { width: 12px; height: 12px; }
.search { display: flex; align-items: center; gap: 4px; width: 110px; height: 16px; margin-right: 6px; padding: 0 6px 0 4px; border-radius: 8px; background: #2a2b2d; }
.bug { width: 24px; height: 11px; }
.search input { flex: 1; min-width: 0; padding: 0; border: 0; background: none; }
.search input::placeholder { color: #ccc; }
.feathers { position: absolute; left: 515px; top: 0; width: 180px; height: 24px; }

.count { position: absolute; left: 2px; top: 5px; display: flex; align-items: center; gap: 14px; height: 42px; width: 104px; padding-left: 6px; border-radius: 8px; background: rgba(8, 8, 8, .5); color: #fff; font: 700 35px/38px "Liberation Sans", sans-serif; }
.bigk { width: 34px; height: 35px; }
.goal { position: absolute; left: 408px; top: 7px; display: grid; grid-template-columns: 1fr auto 1fr; align-items: center; width: 506px; height: 21px; padding: 0 6px 0 4px; border-left: 3px solid #8c0c1c; background: #dedede; color: #111; font: 15px/20px "Open Sans", "DejaVu Sans Condensed", "DejaVu Sans", sans-serif; }
.goal b:first-child { justify-self: start; font-size: 11px; }
.goal b:last-child { justify-self: end; }
.streamer { position: absolute; left: -9px; bottom: 7px; color: #ffe0a0; font: 700 18px/20px Roboto, sans-serif; text-shadow: 0 0 2px #543; }
.washer { position: absolute; left: 76px; bottom: 5px; width: 24px; height: 24px; }
</style>
